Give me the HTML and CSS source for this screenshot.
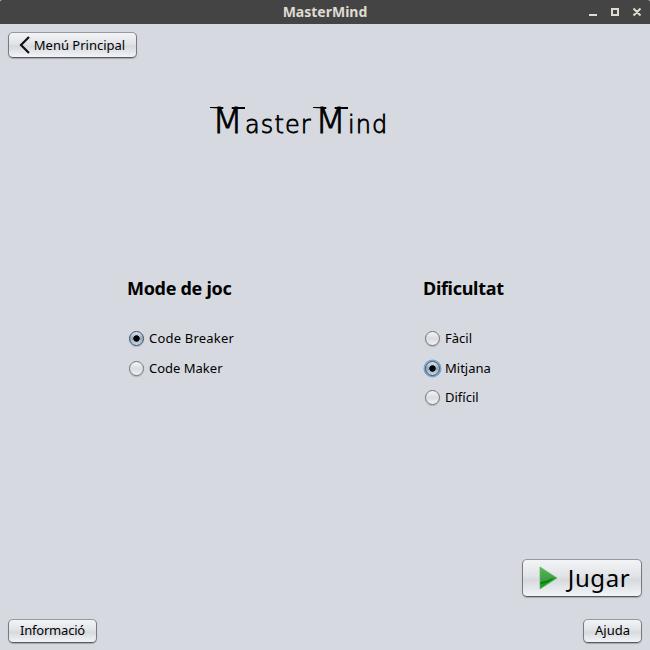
FILE: index.html
```html
<!DOCTYPE html>
<html lang="ca">
<head>
<meta charset="utf-8">
<title>MasterMind</title>
<link rel="stylesheet" href="styles.css">
</head>
<body>
<div class="window">
  <header class="titlebar">
    <span class="title">MasterMind</span>
    <svg class="controls" width="54" height="12" viewBox="0 0 54 12">
      <path d="M1 9h8M24 3h6v6h-6zM45.5 2.5l7 7M52.5 2.5l-7 7" fill="none" stroke="#dfdbd2" stroke-width="2"/>
    </svg>
  </header>
  <main class="content">
    <button class="btn back">
      <svg width="12" height="20" viewBox="0 0 12 20"><path d="M10 2L2 10l8 8" fill="none" stroke="#111" stroke-width="2.2"/></svg>
      <span>Menú Principal</span>
    </button>
    <h1 class="logo"><span class="cap">M</span><span class="aster">aster</span><span class="cap">M</span><span class="ind">ind</span></h1>
    <div class="options">
      <section class="group">
        <h2 class="mode">Mode de joc</h2>
        <label class="option"><i class="radio on"></i><span class="breaker">Code Breaker</span></label>
        <label class="option"><i class="radio"></i><span>Code Maker</span></label>
      </section>
      <section class="group">
        <h2 class="level">Dificultat</h2>
        <label class="option"><i class="radio"></i><span>Fàcil</span></label>
        <label class="option"><i class="radio on focus"></i><span>Mitjana</span></label>
        <label class="option last"><i class="radio"></i><span>Difícil</span></label>
      </section>
    </div>
    <button class="btn play">
      <svg width="19" height="24" viewBox="0 0 19 24">
        <defs><linearGradient id="leaf" x2="0" y2="1"><stop stop-color="#4fbd4f"/><stop offset=".55" stop-color="#439c48"/><stop offset="1" stop-color="#35b535"/></linearGradient></defs>
        <path d="M1 1L18 12L1 23z" fill="url(#leaf)" stroke="#62b966" stroke-width=".8"/>
        <path d="M1.5 16Q9 15 15 11.5L17 12L1.5 22z" fill="#12a411"/>
        <path d="M1.5 16Q9 15 14 12Q10 17 1.5 18z" fill="#14751a"/>
      </svg>
      <span>Jugar</span>
    </button>
    <footer class="footer">
      <button class="btn info"><span>Informació</span></button>
      <button class="btn help"><span>Ajuda</span></button>
    </footer>
  </main>
</div>
</body>
</html>
```
FILE: styles.css
```css
* { box-sizing: border-box; }
body { margin: 0; background: #d6d9df; font: 13px "Noto Sans", sans-serif; color: #000; }
.window { width: 650px; height: 650px; display: flex; flex-direction: column; overflow: hidden; }
.titlebar { height: 24px; flex: none; background: #444; display: grid; grid-template-columns: 1fr auto 1fr; align-items: center; border-radius: 2px 2px 0 0; }
.title { grid-column: 2; color: #dfdbd2; font-weight: 700; font-size: 14px; line-height: 24px; }
.controls { justify-self: end; margin-right: 8px; }
.content { flex: 1; display: flex; flex-direction: column; padding: 8px 8px 7px; }
.btn { display: flex; align-items: center; justify-content: center; padding: 0; border: 1px solid #85888d; border-color: #96999e #777b81 #555a61; border-radius: 5px; background: linear-gradient(#f3f4f6, #e1e3e7 45%, #d6d9de 55%, #f2f4f7); box-shadow: 0 1px 1px #a5a9b0; font: 13px "Noto Sans", sans-serif; color: #000; white-space: nowrap; flex: none; }
.back { width: 129px; height: 26px; gap: 3px; padding-right: 1px; }
.logo { display: flex; align-items: baseline; align-self: flex-start; height: 40px; margin: 43px 0 0 202px; font: 200 24px/40px "DejaVu Sans", "DejaVu Sans Light", sans-serif; -webkit-text-stroke: .8px #000; }
.cap { position: relative; width: 35px; text-align: center; font-size: 36px; }
.cap::before { content: ""; position: absolute; left: 0; right: 0; top: 6px; border-top: 2px solid #000; clip-path: polygon(0 0, 38% 0, 38% 100%, 62% 100%, 62% 0, 100% 0, 100% 100%, 62% 100%, 0 50%); }
.aster { width: 68px; letter-spacing: 1.1px; }
.ind { width: 42px; letter-spacing: 1px; }
.options { display: grid; grid-template-columns: 296px 1fr; margin: 135px 0 0 119px; }
.group { display: flex; flex-direction: column; }
h2 { margin: 0 0 22px; font: 700 18px/25px "Noto Sans", sans-serif; letter-spacing: -.3px; }
.option { display: flex; align-items: center; gap: 5px; height: 30px; padding-left: 2px; }
.breaker { letter-spacing: .2px; }
.last { height: 28px; }
.radio { width: 15px; height: 15px; border: 1px solid #73777d; border-radius: 50%; background: linear-gradient(#f5f5f7, #dadce1 50%, #f1f2f4); box-shadow: 0 1px 1px #aeb2b8; }
.on { border-color: #3e4f60; background: radial-gradient(circle, #000 2.8px, transparent 3.6px), linear-gradient(#dce6f0, #91a9be 50%, #c8d8e6); }
.focus { box-shadow: 0 0 0 1.5px #73a4d1; }
.play { width: 120px; height: 38px; margin-top: auto; align-self: flex-end; gap: 10px; padding-left: 5px; font-size: 24px; letter-spacing: .6px; }
.play span { padding-bottom: 2px; }
.footer { display: flex; justify-content: space-between; margin-top: 22px; }
.footer .btn { padding-bottom: 2px; }
.info { width: 89px; height: 24px; letter-spacing: -.2px; }
.help { width: 59px; height: 24px; }
```
